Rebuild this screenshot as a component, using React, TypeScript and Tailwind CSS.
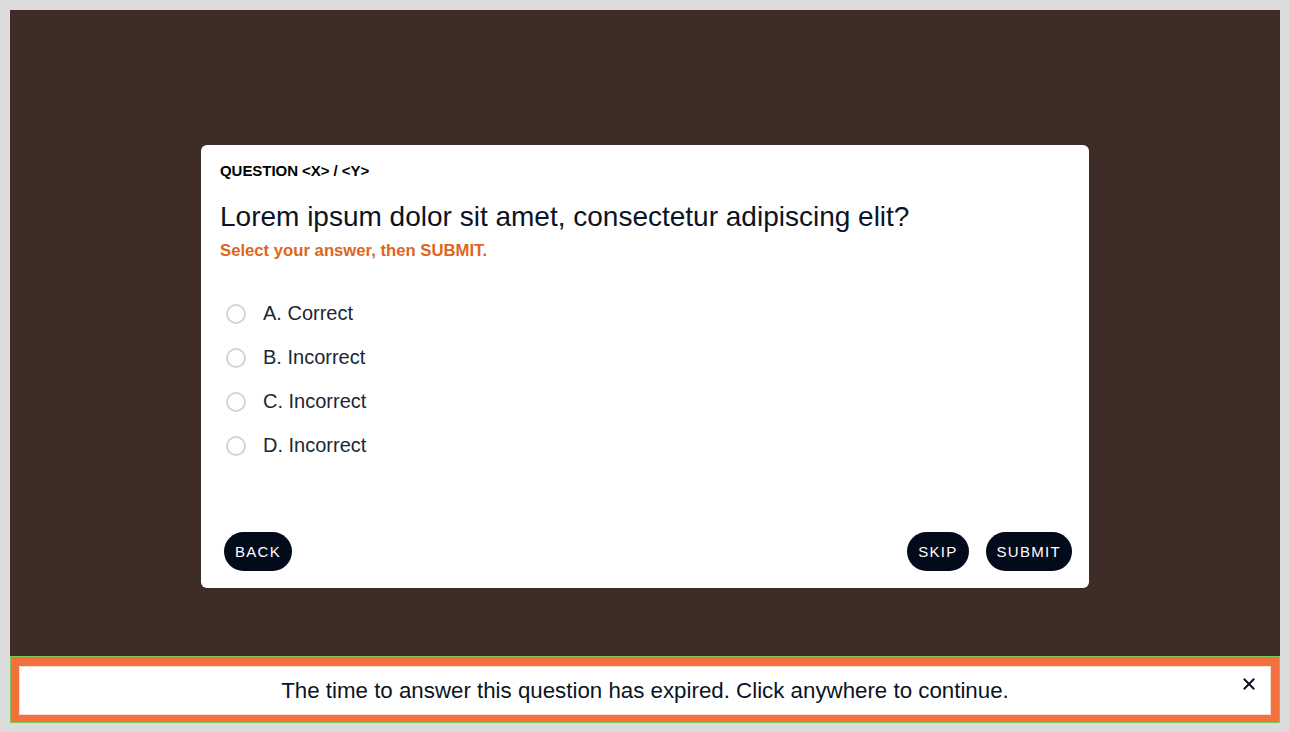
import React from "react";

const options = ["A. Correct", "B. Incorrect", "C. Incorrect", "D. Incorrect"];

function Btn({ children }: { children: React.ReactNode }) {
  return (
    <button className="h-[39px] rounded-full bg-[#030b1a] px-[11px] text-[15px] tracking-[1.3px] text-white leading-none">
      {children}
    </button>
  );
}

export default function App() {
  return (
    <div
      className="w-full h-[732px] bg-[#dcdcdc] pl-[10px] pr-[9px] pt-[10px] overflow-hidden"
      style={{ fontFamily: '"Liberation Sans", Arial, sans-serif' }}
    >
      <div className="relative h-[713px] bg-[#3d2d26] flex items-center justify-center">
        <div className="w-[888px] h-[443px] bg-white rounded-[6px] flex flex-col pt-[16px] pl-[19px] pr-[17px] pb-[17px]">
          <div className="text-[15px] leading-[20px] font-bold text-black tracking-[-0.05px]">
            QUESTION &lt;X&gt; / &lt;Y&gt;
          </div>
          <div className="mt-[19px] text-[28px] leading-[34px] text-[#0b1424]">
            Lorem ipsum dolor sit amet, consectetur adipiscing elit?
          </div>
          <div className="mt-[7px] text-[16.7px] leading-[20px] font-bold text-[#de661c]">
            Select your answer, then SUBMIT.
          </div>
          <div className="mt-[31px] flex flex-col">
            {options.map((o) => (
              <div key={o} className="h-[44px] flex items-center pl-[6px]">
                <span className="w-[20px] h-[20px] rounded-full border-2 border-[#d4d4d4] bg-white" />
                <span className="ml-[17px] text-[20px] leading-[24px] text-[#1c2636] -translate-y-[1px]">{o}</span>
              </div>
            ))}
          </div>
          <div className="mt-auto flex items-center pl-[4px]">
            <Btn>BACK</Btn>
            <div className="ml-auto flex gap-[17px]">
              <Btn>SKIP</Btn>
              <Btn>SUBMIT</Btn>
            </div>
          </div>
        </div>

        <div className="absolute left-0 right-0 top-[646px] border border-[#7cc95a] bg-[#f3703f] pt-[9px] pb-[7px] px-[8px]">
          <div className="relative h-[49px] bg-white border border-[#fcdccd] flex items-center justify-center">
            <span className="text-[22.3px] leading-[26px] text-[#0b1424]">
              The time to answer this question has expired. Click anywhere to continue.
            </span>
            <svg
              className="absolute right-[15px] top-[11px]"
              width="12"
              height="12"
              viewBox="0 0 12 12"
            >
              <path d="M1.5 1.5 L10.5 10.5 M10.5 1.5 L1.5 10.5" stroke="#0b1424" strokeWidth="2" strokeLinecap="square" />
            </svg>
          </div>
        </div>
      </div>
    </div>
  );
}
